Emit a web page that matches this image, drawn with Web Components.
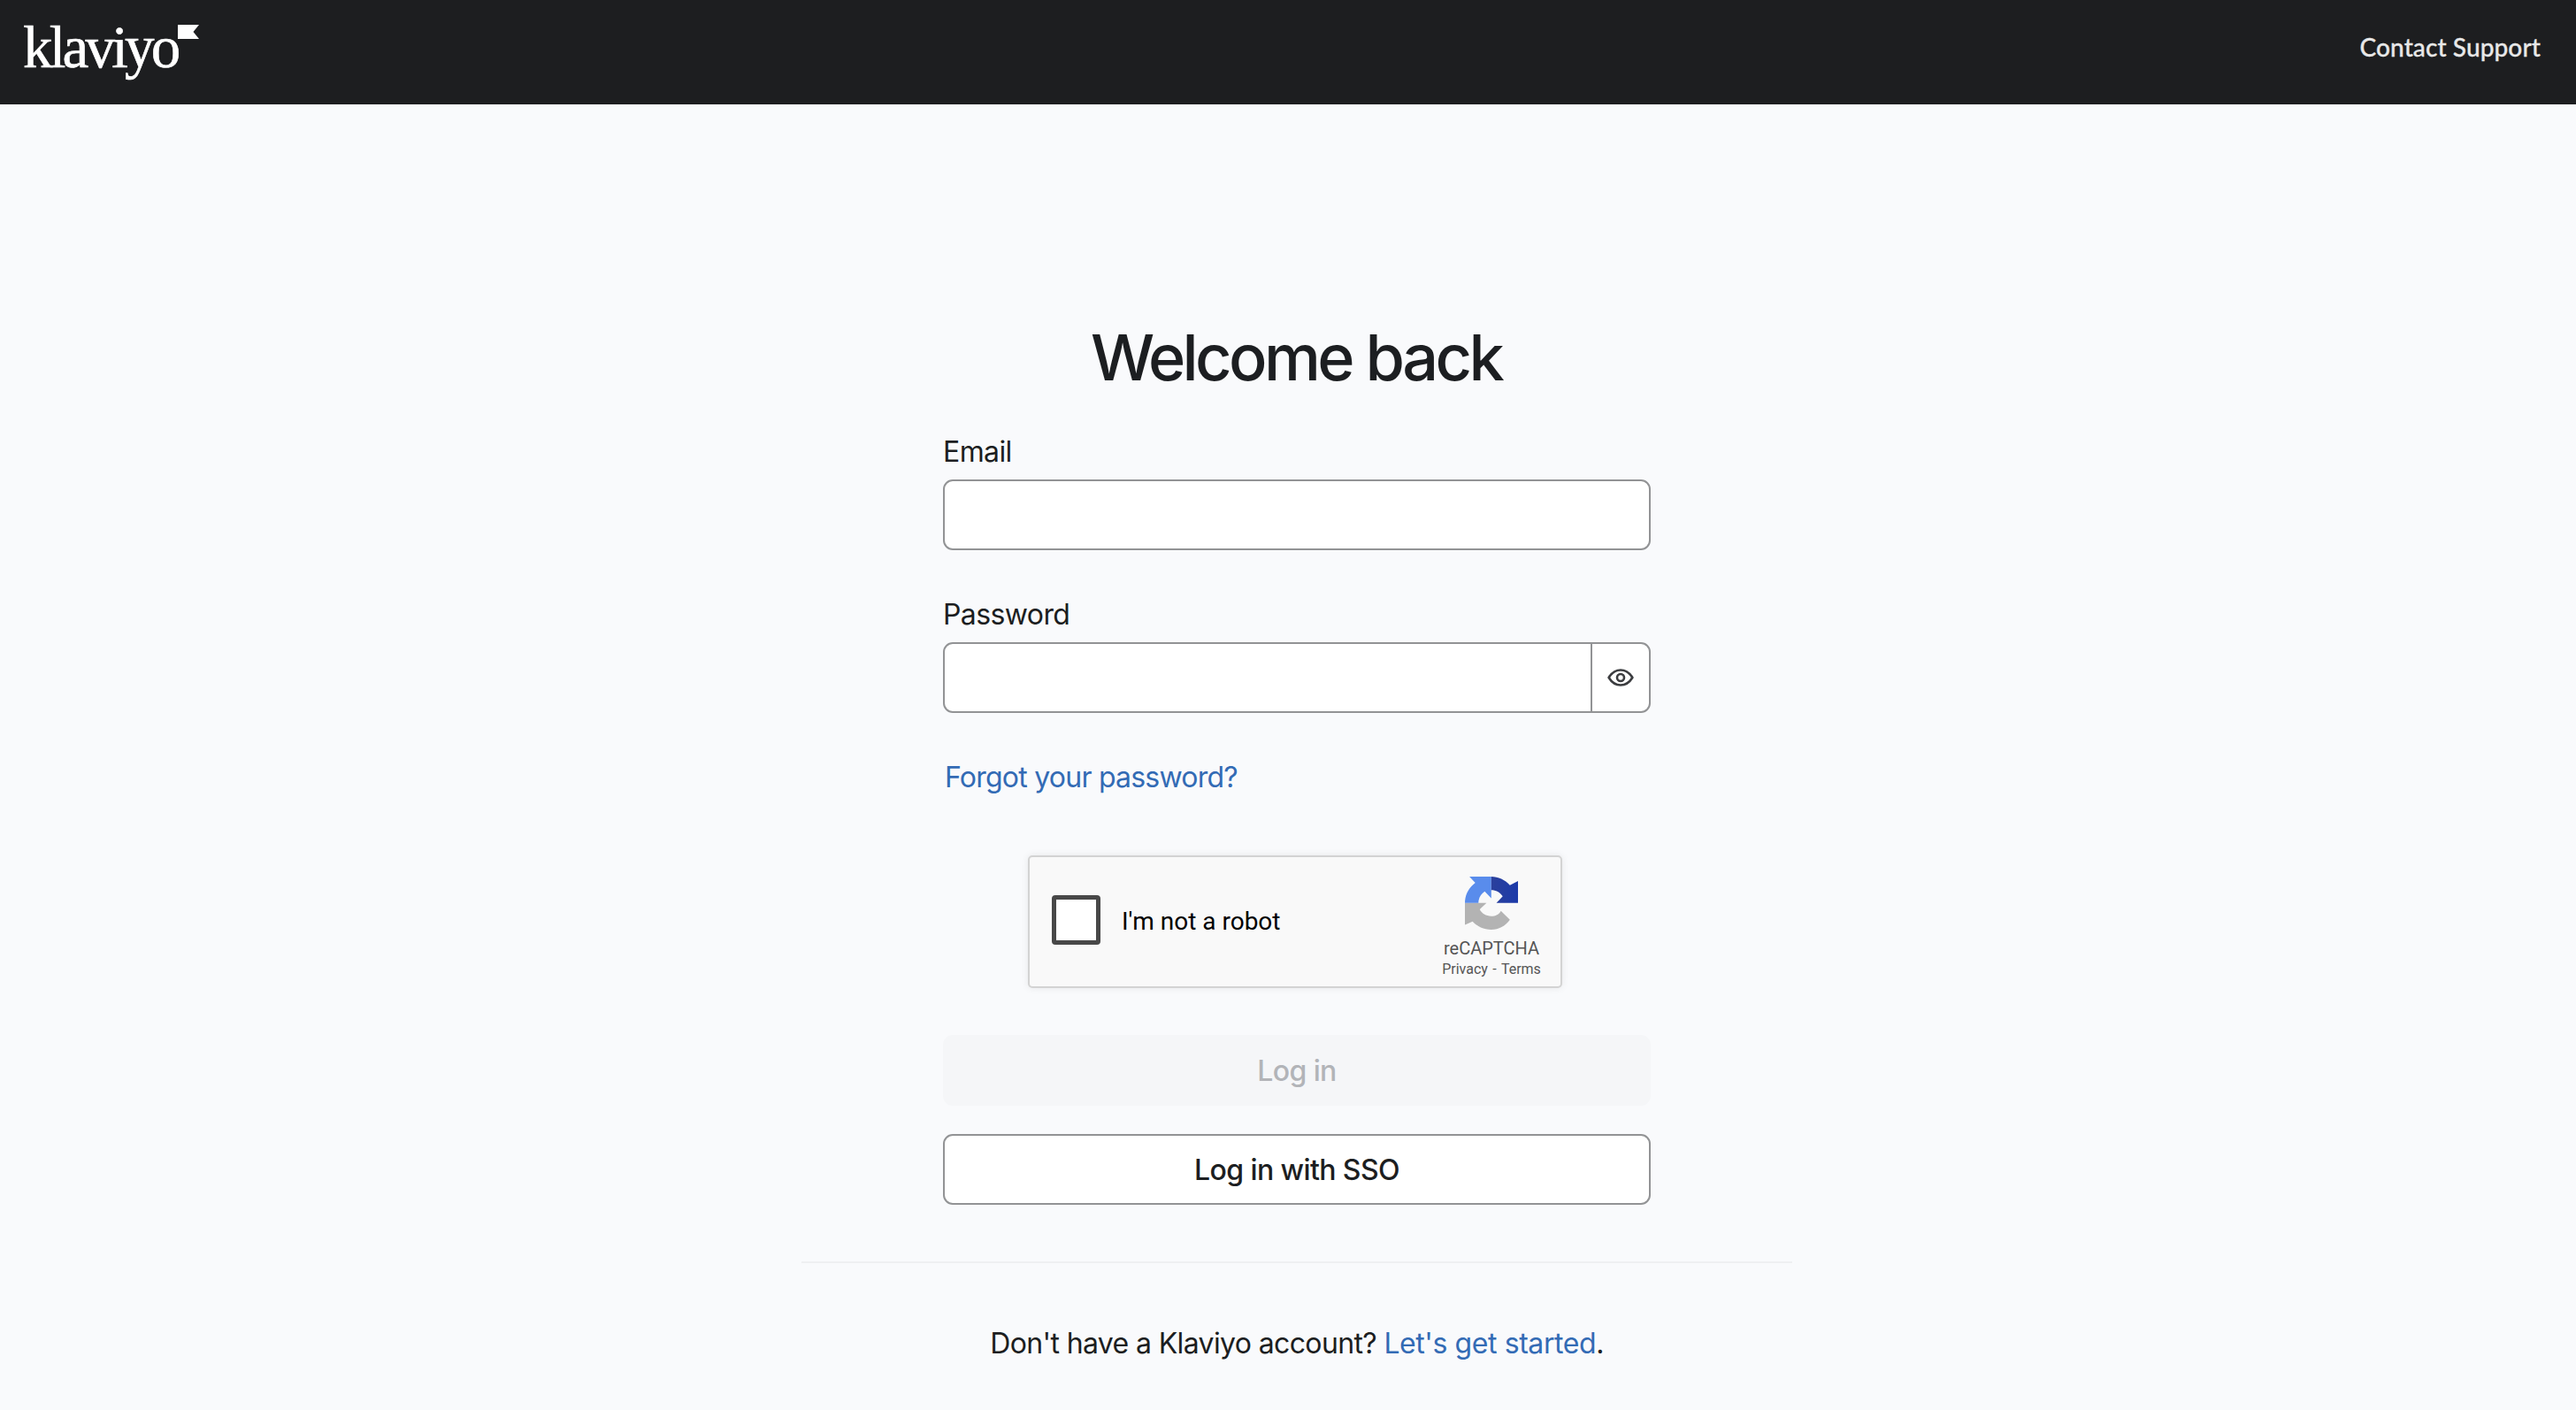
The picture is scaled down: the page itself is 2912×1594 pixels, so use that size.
<!DOCTYPE html>
<html lang="en"><head><meta charset="utf-8"><title>Klaviyo</title>
<style>
html,body{margin:0;padding:0;height:100%;overflow:hidden;background:#f9fafc}
body{font-family:Inter,"Liberation Sans",sans-serif;color:#1c1e21}
</style></head><body>
<kl-app></kl-app>
<script>
function def(name,html,init){customElements.define(name,class extends HTMLElement{constructor(){super();const s=this.attachShadow({mode:'open'});s.innerHTML=html(this);if(init)init(this,s)}})}
def('kl-logo',()=>`<style>:host{display:flex;align-items:flex-start;height:118px;padding:0 0 0 26px;box-sizing:border-box;position:relative}
.w{font:400 67px/1 "Liberation Serif",serif;color:#fff;letter-spacing:-3.800px;margin-top:20px;display:block;-webkit-text-stroke:.6px #fff}
svg{position:absolute;left:201px;top:28px}</style><span class="w">klaviyo</span><svg width="24" height="17" viewBox="0 0 24 17"><path fill="#fff" d="M0 0H24L17.500 8 24 16H0Z"/></svg>`);
def('kl-header',()=>`<style>:host{display:flex;justify-content:space-between;height:118px;background:#1d1e20}
a{font:500 28px/1 Lato,sans-serif;color:#e8e8e8;margin:39px 40px 0 0;letter-spacing:.1px;-webkit-text-stroke:.3px #e8e8e8}</style><kl-logo></kl-logo><a>Contact Support</a>`);
def('kl-field',h=>`<style>:host{display:block;margin-bottom:53px}
label{display:block;font:400 32px/40px Inter,sans-serif;height:40px;margin-bottom:11px;color:#1c1e21;letter-spacing:-.6px}
.b{display:flex;height:80px;box-sizing:border-box;border:2px solid #929395;border-radius:11px;background:#fff;overflow:hidden}
input{flex:1;min-width:0;border:0;background:none;outline:0;padding:0 20px;font:inherit}
.e{width:64px;border-left:2px solid #929395;display:flex;align-items:center;justify-content:center}
.e:empty{display:none}
</style><label>${h.getAttribute('label')}</label><div class="b"><input type="${h.getAttribute('type')||'text'}"><div class="e">${h.hasAttribute('eye')?`<svg width="30" height="20" viewBox="0 0 30 20" fill="none" stroke="#3c3d40" stroke-width="2.600"><path d="M1.600 10C5 4.500 9.600 1.500 15 1.500s10 3 13.400 8.500C25 15.500 20.400 18.500 15 18.500S5 15.500 1.600 10Z" stroke-linejoin="round"/><circle cx="15" cy="10" r="4"/></svg>`:''}</div></div>`);
def('kl-button',h=>`<style>:host{display:flex;align-items:center;justify-content:center;height:80px;box-sizing:border-box;padding-top:2px;border-radius:11px;font:500 32px/40px Inter,sans-serif;letter-spacing:-.6px;border:2px solid #929395;background:#fff;color:#1c1e21}
:host([disabled]){border-color:#f5f6f8;background:#f5f6f8;color:#b2b4b8}</style><slot></slot>`);
def('kl-recaptcha',()=>`<style>:host{display:block;width:604px;height:150px;box-sizing:border-box;margin:0 auto;background:#f9f9f9;border:2px solid #d3d3d3;border-radius:5px;box-shadow:0 0 8px rgba(0,0,0,.08);position:relative;font-family:Roboto,sans-serif}
.row{display:flex;height:100%;align-items:flex-start}
.c{width:55px;height:56px;box-sizing:border-box;background:#fff;border:5px solid #484848;border-radius:4px;margin:43px 0 0 25px}
.t{font:400 28px/32px Roboto,sans-serif;color:#000;margin:57px 0 0 24px}
.r{margin-left:auto;width:130px;margin-right:13px;display:flex;flex-direction:column;align-items:center;color:#555}
svg{margin-top:22px;display:block}
.n{font:400 20px/24px Roboto,sans-serif;margin-top:9px}
.p{font:400 16px/20px Roboto,sans-serif;margin-top:2px;word-spacing:1.500px}
</style><div class="row"><div class="c"></div><div class="t">I'm not a robot</div><div class="r">
<svg width="60" height="60" viewBox="0 0 59 59"><defs><linearGradient id="g" x1="0" x2="1"><stop offset="0" stop-color="#2b409c"/><stop offset="1" stop-color="#1c3aa9"/></linearGradient></defs>
<path fill="#b3b3b3" d="M0 29.300H24L16.500 36.500C18.500 41 23.500 44 29.300 44 34 44 38 42 40 38L50 48C45 55 37.500 59 29.300 59 21 59 13.500 55.500 8.500 50L0 53.500Z"/>
<path fill="#598cec" d="M0 29.300C0 20 4.500 12.500 11.500 7L5 0H29.300V24L22 16.500C18 19 15 24 15 29.300Z"/>
<path fill="url(#g)" d="M29.300 0C37 0 44.500 3.500 50 9.500L59 5V29.300H35L42 22C39 17.500 34.500 15 29.300 15Z"/></svg>
<div class="n">reCAPTCHA</div><div class="p">Privacy - Terms</div></div></div>`);
def('kl-app',()=>`<style>:host{display:block;height:100%}
main{width:1120px;margin:0 auto;position:relative;left:10px;display:flex;flex-direction:column;align-items:center}
.f{width:800px;display:block}
h1{font:500 72px/88px Inter,sans-serif;letter-spacing:-3.600px;margin:0 2px 43px 0;text-align:center;color:#1c1e21;padding-top:242px}
a{color:#336bb5}
.fp{font:400 32px/40px Inter,sans-serif;letter-spacing:-.77px;display:block;margin:0 0 0 2px}
kl-recaptcha{margin-top:68px;margin-bottom:53px;position:relative;left:-2px}
kl-button+kl-button{margin-top:32px}
hr{width:1120px;height:2px;border:0;background:#eff0f2;margin:64px 0 0}
p{font:400 32px/40px Inter,sans-serif;letter-spacing:-.63px;margin:71px 0 0;color:#1c1e21}
p a{letter-spacing:-.42px}
</style><kl-header></kl-header><main><div class="f"><h1>Welcome back</h1>
<kl-field label="Email"></kl-field><kl-field label="Password" type="password" eye></kl-field>
<a class="fp">Forgot your password?</a><kl-recaptcha></kl-recaptcha>
<kl-button disabled>Log in</kl-button><kl-button>Log in with SSO</kl-button></div>
<hr><p>Don't have a Klaviyo account? <a>Let's get started</a>.</p></main>`);
</script></body></html>
